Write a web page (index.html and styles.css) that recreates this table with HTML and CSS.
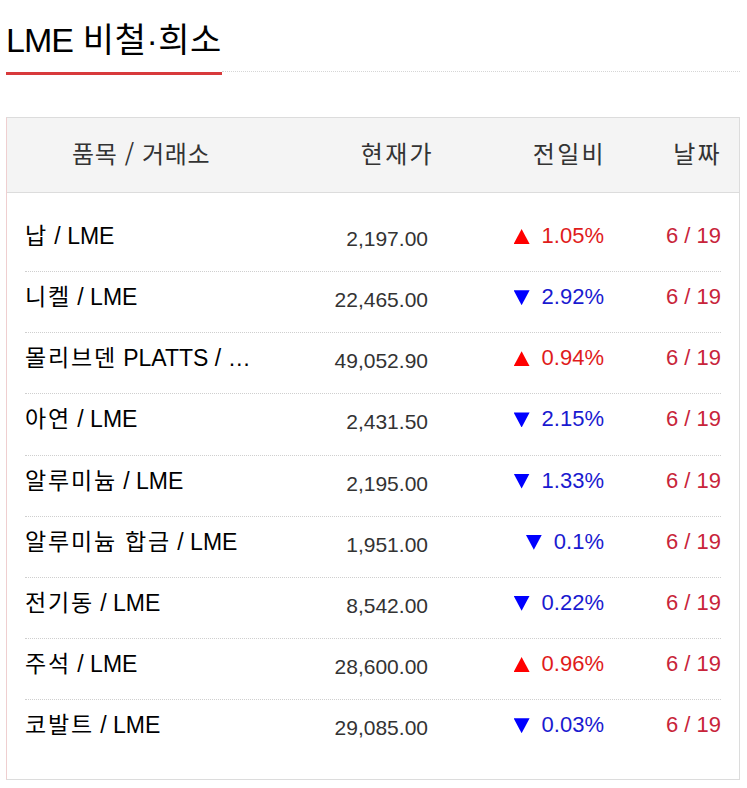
FILE: index.html
```html
<!DOCTYPE html>
<html lang="ko">
<head>
<meta charset="utf-8">
<link rel="stylesheet" href="styles.css">
</head>
<body>
<div class="page">
  <div class="heading">
    <h2 class="title"><span class="latin">LME</span> 비철·희소</h2>
    <div class="rule"></div>
  </div>
  <div class="board">
    <div class="thead">
      <div class="th th-name">품목 / 거래소</div>
      <div class="th th-price">현재가</div>
      <div class="th th-chg">전일비</div>
      <div class="th th-date">날짜</div>
    </div>
    <div class="tbody">
      <div class="row"><div class="name"><span class="ko">납</span> / LME</div><div class="price">2,197.00</div><div class="chg up"><i class="tri"></i>1.05%</div><div class="date">6 / 19</div></div>
      <div class="row"><div class="name"><span class="ko">니켈</span> / LME</div><div class="price">22,465.00</div><div class="chg down"><i class="tri"></i>2.92%</div><div class="date">6 / 19</div></div>
      <div class="row"><div class="name"><span class="ko">몰리브덴</span> PLATTS / <span class="ell">…</span></div><div class="price">49,052.90</div><div class="chg up"><i class="tri"></i>0.94%</div><div class="date">6 / 19</div></div>
      <div class="row"><div class="name"><span class="ko">아연</span> / LME</div><div class="price">2,431.50</div><div class="chg down"><i class="tri"></i>2.15%</div><div class="date">6 / 19</div></div>
      <div class="row"><div class="name"><span class="ko">알루미늄</span> / LME</div><div class="price">2,195.00</div><div class="chg down"><i class="tri"></i>1.33%</div><div class="date">6 / 19</div></div>
      <div class="row"><div class="name"><span class="ko">알루미늄 합금</span> / LME</div><div class="price">1,951.00</div><div class="chg down"><i class="tri"></i>0.1%</div><div class="date">6 / 19</div></div>
      <div class="row"><div class="name"><span class="ko">전기동</span> / LME</div><div class="price">8,542.00</div><div class="chg down"><i class="tri"></i>0.22%</div><div class="date">6 / 19</div></div>
      <div class="row"><div class="name"><span class="ko">주석</span> / LME</div><div class="price">28,600.00</div><div class="chg up"><i class="tri"></i>0.96%</div><div class="date">6 / 19</div></div>
      <div class="row"><div class="name"><span class="ko">코발트</span> / LME</div><div class="price">29,085.00</div><div class="chg down"><i class="tri"></i>0.03%</div><div class="date">6 / 19</div></div>
    </div>
  </div>
</div>
</body>
</html>
```
FILE: styles.css
```css
html, body {
  margin: 0;
  padding: 0;
  background: #fff;
}
body {
  font-family: "Liberation Sans", Arial, "Noto Sans CJK KR", sans-serif;
  color: #000;
}
.page {
  width: 734px;
  padding-left: 6px;
}
.heading {
  display: flex;
  align-items: flex-end;
  padding-top: 20px;
}
.title {
  margin: 0;
  font-weight: normal;
  font-size: 34px;
  line-height: 40px;
  padding-bottom: 12px;
  border-bottom: 3px solid #d83a3c;
  white-space: nowrap;
  letter-spacing: 0.5px;
}
.latin {
  letter-spacing: -1px;
}
.rule {
  flex: 1;
  border-bottom: 1px dotted #d6d6d6;
  margin-bottom: 3px;
}
.board {
  margin-top: 42px;
  border: 1px solid #dcdcdc;
  border-left-color: #efcfd0;
}
.thead, .row {
  display: grid;
  grid-template-columns: 275px 128px 176px 117px;
}
.thead {
  height: 74px;
  padding: 0 18px;
  background: #f4f4f4;
  border-bottom: 1px solid #dcdcdc;
  align-items: center;
  font-family: "Noto Sans CJK KR", sans-serif;
  font-size: 24px;
  color: #333;
}
.th {
  line-height: 28px;
  margin-top: -5px;
  letter-spacing: 2.3px;
}
.th-name { padding-left: 47px; letter-spacing: 0.6px; }
.th-price { text-align: right; margin-right: -6px; }
.th-chg { text-align: right; margin-right: -2px; }
.th-date { text-align: right; margin-right: -1px; }
.tbody {
  padding: 18px 18px 19px;
}
.row {
  height: 60.15px;
  border-bottom: 1px dotted #cfcfcf;
  align-items: start;
}
.row:last-child { border-bottom: none; }
.name {
  font-size: 23px;
  line-height: 24px;
  padding-top: 13px;
  white-space: nowrap;
}
.ko {
  letter-spacing: 1.8px;
}
.ell {
  letter-spacing: 4px;
}
.price {
  font-size: 21px;
  line-height: 24px;
  padding-top: 16px;
  text-align: right;
  color: #333;
}
.chg {
  font-size: 22px;
  line-height: 24px;
  padding-top: 13px;
  text-align: right;
}
.tri {
  display: inline-block;
  width: 16px;
  height: 15px;
  margin-right: 12px;
  vertical-align: -1px;
}
.up { color: #e01b1b; }
.up .tri { background: #ff0000; clip-path: polygon(50% 0, 100% 100%, 0 100%); }
.down { color: #1a1ad0; }
.down .tri { background: #0000ff; clip-path: polygon(0 0, 100% 0, 50% 100%); }
.date {
  font-size: 22px;
  line-height: 24px;
  padding-top: 13px;
  text-align: right;
  color: #c8243a;
}
```
